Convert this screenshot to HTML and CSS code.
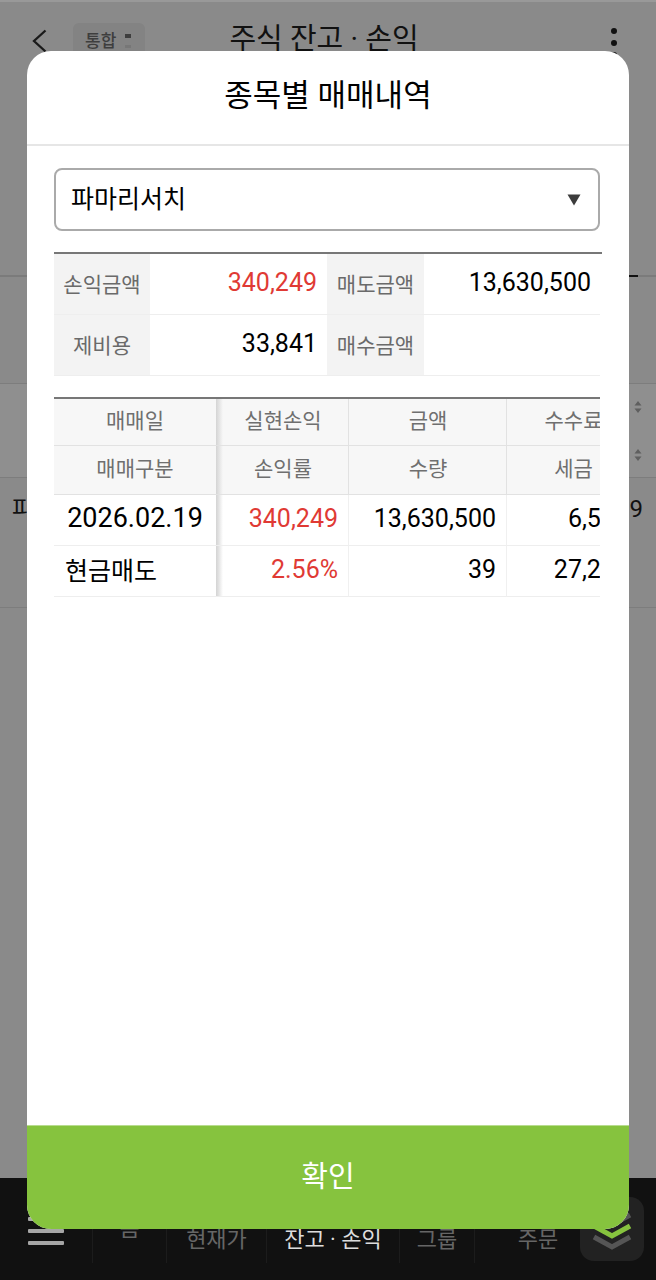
FILE: index.html
```html
<!DOCTYPE html>
<html lang="ko">
<head>
<meta charset="utf-8">
<title>종목별 매매내역</title>
<link rel="stylesheet" href="styles.css">
</head>
<body>
<div class="screen">
  <header class="topbar">
    <svg class="back" width="16" height="24" viewBox="0 0 16 24"><path d="M14.5 1.5 3 12l11.5 10.500" fill="none" stroke="#1a1a1a" stroke-width="2.300"/></svg>
    <div class="chip">통합<span class="chip-dots"><i></i><i></i><i></i></span></div>
    <div class="page-title">주식 잔고 · 손익</div>
    <div class="kebab"><i></i><i></i><i></i></div>
  </header>
  <div class="tabs-area"><span class="tab-mark"></span></div>
  <div class="list-gap"></div>
  <div class="list-head">
    <svg class="sort" width="8" height="12" viewBox="0 0 8 12"><path d="M4 0 7.500 4.500h-7zM4 12 .5 7.500h7z" fill="#5f5f5f"/></svg>
    <svg class="sort" width="8" height="12" viewBox="0 0 8 12"><path d="M4 0 7.500 4.500h-7zM4 12 .5 7.500h7z" fill="#5f5f5f"/></svg>
  </div>
  <div class="list-row"><span>파</span><span>9</span></div>
  <div class="grow"></div>
  <nav class="bottom">
    <div class="nav-cell burger-cell"><div class="burger"><i></i><i></i><i></i></div></div>
    <div class="nav-cell home-cell">몸</div>
    <div class="nav-cell price-cell">현재가</div>
    <div class="nav-cell on-cell">잔고 · 손익</div>
    <div class="nav-cell group-cell">그룹</div>
    <div class="nav-cell order-cell">주문</div>
    <div class="fab">
      <svg width="46" height="50" viewBox="0 0 46 50"><path d="M5 11 23 21 41 11" fill="none" stroke="#555" stroke-width="5"/><path d="M5 22 23 32 41 22" fill="none" stroke="#86c33e" stroke-width="5"/><path d="M5 33 23 43 41 33" fill="none" stroke="#555" stroke-width="5"/></svg>
    </div>
  </nav>

  <section class="modal">
    <h1 class="modal-title">종목별 매매내역</h1>
    <div class="modal-body">
      <div class="select"><span>파마리서치</span><svg width="14" height="12" viewBox="0 0 14 12"><path d="M0.500 0.500h13L7 11.500z" fill="#3c3c3c"/></svg></div>

      <div class="summary">
        <div class="s-label">손익금액</div><div class="s-val red">340,249</div>
        <div class="s-label">매도금액</div><div class="s-val s-end">13,630,500</div>
        <div class="s-label">제비용</div><div class="s-val">33,841</div>
        <div class="s-label">매수금액</div><div class="s-val s-end"></div>
      </div>

      <div class="trades">
        <div class="t-head frozen">매매일</div><div class="t-head after-frozen">실현손익</div><div class="t-head">금액</div><div class="t-head">수수료</div>
        <div class="t-head frozen">매매구분</div><div class="t-head after-frozen">손익률</div><div class="t-head">수량</div><div class="t-head">세금</div>
        <div class="t-cell frozen date">2026.02.19</div><div class="t-cell after-frozen red">340,249</div><div class="t-cell">13,630,500</div><div class="t-cell">6,523</div>
        <div class="t-cell frozen kind">현금매도</div><div class="t-cell after-frozen red">2.56%</div><div class="t-cell">39</div><div class="t-cell">27,261</div>
      </div>
    </div>
    <button class="confirm">확인</button>
  </section>
</div>
</body>
</html>
```
FILE: styles.css
```css
* { box-sizing: border-box; }
html, body { margin: 0; padding: 0; }
body { font-family: Roboto, "Noto Sans CJK KR", sans-serif; color: #000; }
.screen { position: relative; width: 656px; height: 1280px; background: #8a8a8a; display: flex; flex-direction: column; overflow: hidden; }

.topbar { height: 92px; display: flex; align-items: flex-start; position: relative; border-top: 2px solid #999; }
.back { margin: 27px 0 0 31px; }
.chip { margin: 21px 0 0 26px; width: 72px; height: 36px; border-radius: 6px; background: #838383; color: #3e3e3e; font-size: 17px; line-height: 36px; padding-left: 12px; display: flex; font-weight: 500; }
.chip-dots { display: flex; flex-direction: column; gap: 7px; margin: 11px 0 0 9px; }
.chip-dots i { width: 6px; height: 4px; background: #3e3e3e; }
.chip-dots i + i { background: #777; }
.page-title { position: absolute; left: 160px; width: 328px; top: 18px; text-align: center; font-size: 29px; line-height: 38px; color: #111; }
.kebab { position: absolute; left: 611px; top: 26px; display: flex; flex-direction: column; gap: 6px; }
.kebab i { width: 6px; height: 6px; border-radius: 50%; background: #111; }

.tabs-area { height: 185px; border-bottom: 2px solid #7b7b7b; position: relative; }
.tab-mark { position: absolute; left: 629px; bottom: -2px; width: 9px; height: 2px; background: #111; }
.list-gap { height: 106px; }
.list-head { height: 95px; background: #8f8f8f; border-top: 1px solid #7d7d7d; border-bottom: 1px solid #7d7d7d; display: flex; flex-direction: column; align-items: flex-end; padding: 17px 14px 0 0; gap: 36px; }
.list-row { height: 130px; background: #8a8a8a; border-bottom: 1px solid #7d7d7d; display: flex; justify-content: space-between; padding: 13px 13px 0 12px; font-size: 24px; line-height: 36px; color: #111; }
.grow { flex: 1; }

.bottom { height: 102px; background: #111; position: relative; color: #666; display: flex; align-items: flex-start; }
.nav-cell { height: 85px; flex: none; border-right: 1px solid #1c1c1c; text-align: center; font-size: 22px; line-height: 34px; padding-top: 45px; white-space: nowrap; }
.burger-cell { width: 93px; padding: 39px 0 0 28px; }
.burger { display: flex; flex-direction: column; gap: 8px; }
.burger i { width: 36px; height: 4px; background: #a6a6a6; border-radius: 1px; }
.home-cell { width: 74px; padding-top: 34px; }
.price-cell { width: 100px; }
.on-cell { width: 133px; color: #ddd; }
.group-cell { width: 75px; }
.order-cell { width: 126px; border-right: 0; }
.fab { position: absolute; left: 580px; top: 19px; width: 64px; height: 64px; border-radius: 14px; background: #222; display: flex; align-items: center; justify-content: center; }

.modal { position: absolute; left: 27px; top: 51px; width: 602px; height: 1178px; background: #fff; border-radius: 24px; display: flex; flex-direction: column; overflow: hidden; }
.modal-title { margin: 0; height: 95px; flex: none; border-bottom: 2px solid #e6e6e6; font-size: 31px; font-weight: 400; line-height: 90px; text-align: center; }
.modal-body { flex: 1; padding: 22px 27px 0; display: flex; flex-direction: column; }
.select { width: 546px; height: 63px; border: 2px solid #aaa; border-radius: 8px; display: flex; align-items: center; justify-content: space-between; padding: 0 17px 0 15px; font-size: 25px; }
.select span { padding-bottom: 6px; }
.summary { margin-top: 21px; border-top: 2px solid #777; display: grid; grid-template-columns: 96px 177px 97px 176px; grid-auto-rows: 61px; }
.s-label { background: #f3f3f3; color: #6a6a6a; font-size: 21px; display: flex; align-items: center; justify-content: center; padding-bottom: 3px; border-bottom: 1px solid #eee; }
.s-val { font-size: 25px; display: flex; align-items: center; justify-content: flex-end; padding: 0 10px 3px 0; border-bottom: 1px solid #eee; }
.s-end { padding-right: 9px; }
.red { color: #e03a34; }

.trades { margin-top: 21px; width: 546px; overflow: hidden; border-top: 2px solid #777; display: grid; grid-template-columns: 162px 133px 158px 133px; grid-template-rows: 47px 49px 51px 51px; }
.t-head { background: #f7f7f7; color: #6f6f6f; font-size: 21px; display: flex; align-items: center; justify-content: center; padding: 0 0 7px 1px; border-right: 1px solid #e2e2e2; border-bottom: 1px solid #e2e2e2; white-space: nowrap; }
.t-cell { font-size: 25px; display: flex; align-items: center; justify-content: flex-end; padding: 0 10px 4px 0; border-right: 1px solid #f0f0f0; border-bottom: 1px solid #eee; white-space: nowrap; }
.frozen { border-right: 0; padding-left: 0; }
.t-cell.frozen { justify-content: center; padding-right: 0; }
.date { font-size: 27px; }
.t-cell.kind { justify-content: flex-start; padding-left: 11px; }
.after-frozen { padding-left: 2px; background-image: linear-gradient(90deg, #d4d4d4, #dedede 2px, rgba(255,255,255,0) 7px); }

.confirm { flex: none; height: 104px; border: 0; padding: 0 0 7px; background: #86c33e; color: #fff; font: inherit; font-size: 29px; border-top: 1px solid #b8dc8e; }
```
